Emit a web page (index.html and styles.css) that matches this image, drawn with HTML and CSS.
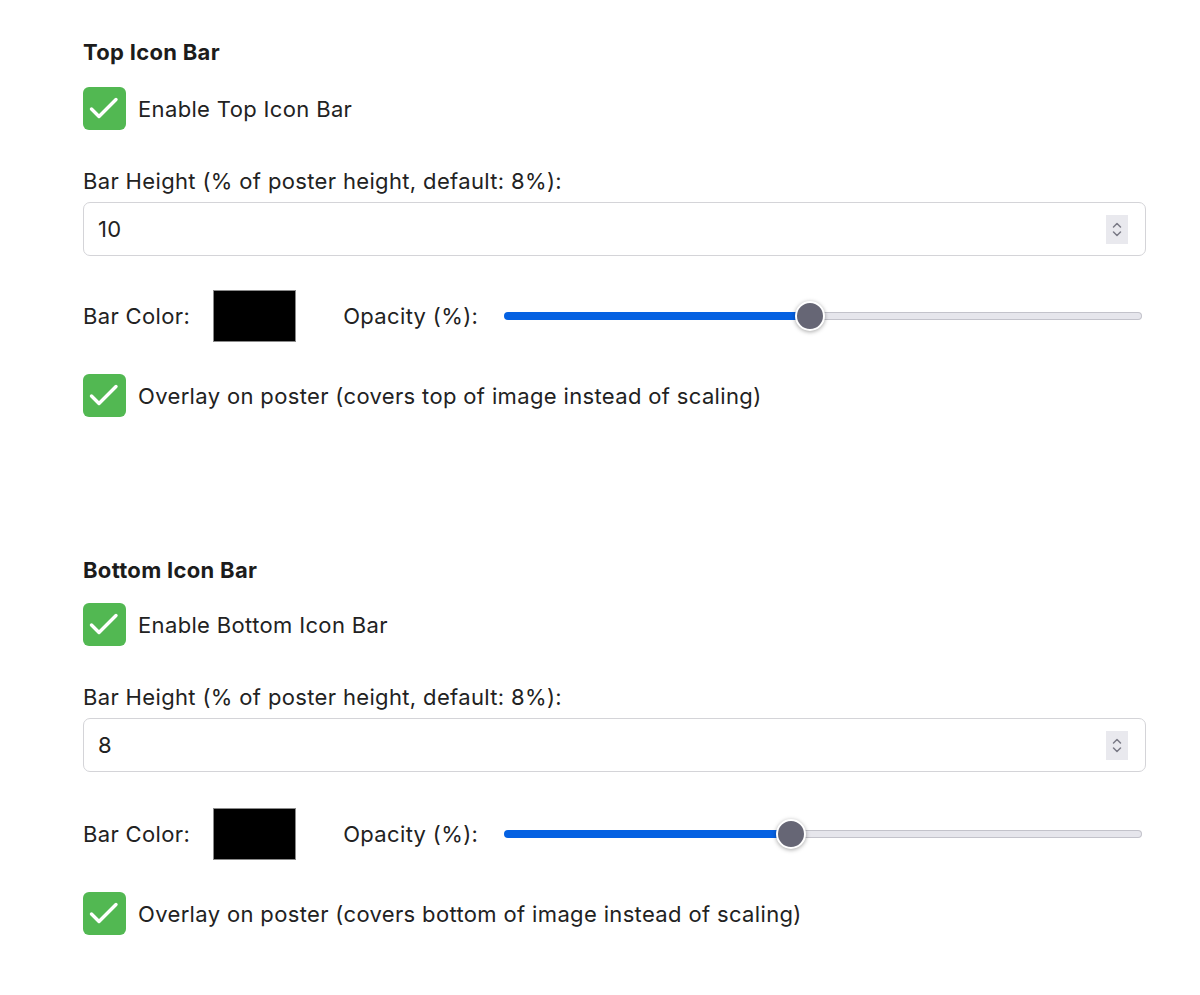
FILE: index.html
```html
<!DOCTYPE html>
<html lang="en">
<head>
<meta charset="utf-8">
<title>Icon Bar Settings</title>
<link rel="stylesheet" href="styles.css">
</head>
<body>
<main class="panel">
  <section class="bar-section">
    <h3 class="section-title">Top Icon Bar</h3>
    <label class="check-row">
      <span class="check-box"><svg viewBox="0 0 43 43" width="43" height="43"><path d="M8.5 22L16 29.5L33 12.5" fill="none" stroke="#fff" stroke-width="3.4" stroke-linecap="round" stroke-linejoin="round"/></svg></span>
      <span class="check-label">Enable Top Icon Bar</span>
    </label>
    <div class="field-label">Bar Height (% of poster height, default: 8%):</div>
    <div class="number-input">
      <span class="number-value">10</span>
      <span class="spinner"><svg viewBox="0 0 22 29" width="22" height="29"><path d="M7.5 12l3.5-3.5 3.5 3.5M7.5 17l3.5 3.5 3.5-3.5" fill="none" stroke="#7a7a86" stroke-width="1.5" stroke-linecap="round" stroke-linejoin="round"/></svg></span>
    </div>
    <div class="color-row">
      <span class="row-label">Bar Color:</span>
      <span class="swatch"></span>
      <span class="row-label opacity-label">Opacity (%):</span>
      <div class="slider">
        <div class="slider-fill" style="width: 48%"></div>
        <div class="slider-rest"><span class="slider-thumb"></span></div>
      </div>
    </div>
    <label class="check-row overlay-row">
      <span class="check-box"><svg viewBox="0 0 43 43" width="43" height="43"><path d="M8.5 22L16 29.5L33 12.5" fill="none" stroke="#fff" stroke-width="3.4" stroke-linecap="round" stroke-linejoin="round"/></svg></span>
      <span class="check-label">Overlay on poster (covers top of image instead of scaling)</span>
    </label>
  </section>

  <section class="bar-section second">
    <h3 class="section-title">Bottom Icon Bar</h3>
    <label class="check-row">
      <span class="check-box"><svg viewBox="0 0 43 43" width="43" height="43"><path d="M8.5 22L16 29.5L33 12.5" fill="none" stroke="#fff" stroke-width="3.4" stroke-linecap="round" stroke-linejoin="round"/></svg></span>
      <span class="check-label">Enable Bottom Icon Bar</span>
    </label>
    <div class="field-label">Bar Height (% of poster height, default: 8%):</div>
    <div class="number-input">
      <span class="number-value">8</span>
      <span class="spinner"><svg viewBox="0 0 22 29" width="22" height="29"><path d="M7.5 12l3.5-3.5 3.5 3.5M7.5 17l3.5 3.5 3.5-3.5" fill="none" stroke="#7a7a86" stroke-width="1.5" stroke-linecap="round" stroke-linejoin="round"/></svg></span>
    </div>
    <div class="color-row">
      <span class="row-label">Bar Color:</span>
      <span class="swatch"></span>
      <span class="row-label opacity-label">Opacity (%):</span>
      <div class="slider">
        <div class="slider-fill" style="width: 45%"></div>
        <div class="slider-rest"><span class="slider-thumb"></span></div>
      </div>
    </div>
    <label class="check-row overlay-row">
      <span class="check-box"><svg viewBox="0 0 43 43" width="43" height="43"><path d="M8.5 22L16 29.5L33 12.5" fill="none" stroke="#fff" stroke-width="3.4" stroke-linecap="round" stroke-linejoin="round"/></svg></span>
      <span class="check-label">Overlay on poster (covers bottom of image instead of scaling)</span>
    </label>
  </section>
</main>
</body>
</html>
```
FILE: styles.css
```css
* { box-sizing: border-box; }
html, body {
  margin: 0;
  background: #ffffff;
}
body {
  font-family: Inter, "Noto Sans", "Liberation Sans", sans-serif;
  color: #222222;
  font-size: 22px;
  letter-spacing: 0.35px;
}
.panel {
  padding: 39px 54px 0 83px;
}
.bar-section {
  display: flex;
  flex-direction: column;
}
.bar-section.second {
  margin-top: 140px;
}
.section-title {
  margin: 0;
  font-size: 22px;
  line-height: 26px;
  font-weight: 700;
  letter-spacing: 0.3px;
  color: #1c1c1c;
}
.check-row {
  display: flex;
  align-items: center;
  gap: 12px;
  margin-top: 22px;
}
.second .check-row {
  margin-top: 20px;
}
.check-box {
  width: 43px;
  height: 43px;
  border-radius: 6px;
  background: #52b852;
  display: flex;
  align-items: center;
  justify-content: center;
  flex: none;
}
.check-box svg { display: block; }
.check-label {
  line-height: 26px;
}
.field-label {
  margin-top: 38px;
  line-height: 26px;
}
.number-input {
  margin-top: 8px;
  height: 54px;
  border: 1px solid #d4d4d8;
  border-radius: 7px;
  display: flex;
  align-items: center;
  padding: 0 17px 0 14px;
}
.number-value {
  flex: 1;
}
.spinner {
  width: 22px;
  height: 29px;
  background: #e9e9ee;
  display: block;
}
.spinner svg { display: block; }
.color-row {
  margin-top: 34px;
  display: flex;
  align-items: center;
  height: 52px;
}
.second .color-row {
  margin-top: 36px;
}
.swatch {
  width: 83px;
  height: 52px;
  background: #000;
  border: 1px solid #8a8a8a;
  margin-left: 23px;
}
.opacity-label {
  margin-left: 47px;
}
.slider {
  flex: 1;
  margin-left: 26px;
  margin-right: 4px;
  display: flex;
  align-items: center;
  height: 30px;
}
.slider-fill {
  height: 8px;
  background: #0561e2;
  border-radius: 4px 0 0 4px;
}
.slider-rest {
  flex: 1;
  height: 8px;
  background: #e6e6ec;
  border: 1px solid #c3c3cb;
  border-left: none;
  border-radius: 0 4px 4px 0;
  position: relative;
}
.slider-thumb {
  position: absolute;
  left: -15px;
  top: -12px;
  width: 30px;
  height: 30px;
  border-radius: 50%;
  background: #666675;
  border: 2px solid #ffffff;
  box-shadow: 0 1px 4px rgba(0,0,0,0.35);
}
.second .overlay-row,
.overlay-row {
  margin-top: 32px;
}
```
